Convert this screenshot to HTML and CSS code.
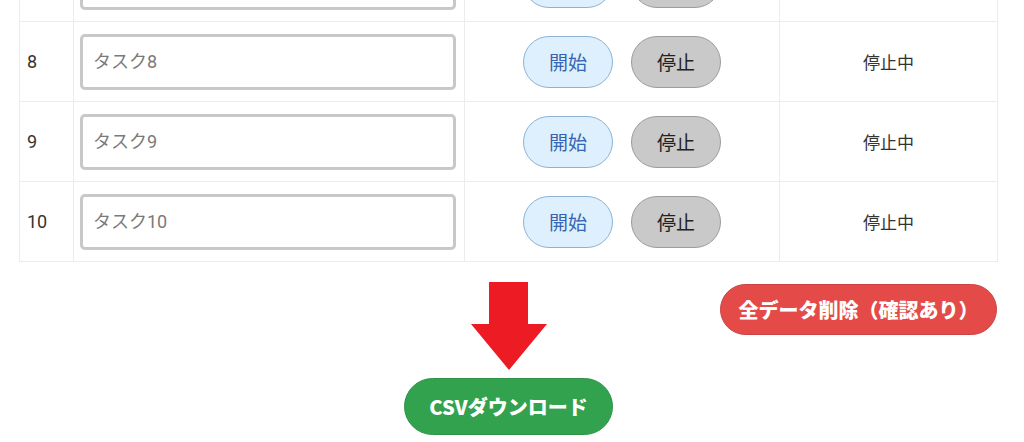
FILE: index.html
```html
<!DOCTYPE html>
<html lang="ja">
<head>
<meta charset="utf-8">
<link rel="stylesheet" href="styles.css">
</head>
<body>
<div class="page">
  <div class="table">
    <div class="row">
      <div class="cell num">7</div>
      <div class="cell name"><input class="task" type="text" placeholder="タスク7"></div>
      <div class="cell ctrl"><button class="btn start">開始</button><button class="btn stop">停止</button></div>
      <div class="cell status">停止中</div>
    </div>
    <div class="row">
      <div class="cell num">8</div>
      <div class="cell name"><input class="task" type="text" placeholder="タスク8"></div>
      <div class="cell ctrl"><button class="btn start">開始</button><button class="btn stop">停止</button></div>
      <div class="cell status">停止中</div>
    </div>
    <div class="row">
      <div class="cell num">9</div>
      <div class="cell name"><input class="task" type="text" placeholder="タスク9"></div>
      <div class="cell ctrl"><button class="btn start">開始</button><button class="btn stop">停止</button></div>
      <div class="cell status">停止中</div>
    </div>
    <div class="row">
      <div class="cell num">10</div>
      <div class="cell name"><input class="task" type="text" placeholder="タスク10"></div>
      <div class="cell ctrl"><button class="btn start">開始</button><button class="btn stop">停止</button></div>
      <div class="cell status">停止中</div>
    </div>
  </div>
  <div class="actions">
    <div class="center">
      <svg class="arrow" width="76" height="88" viewBox="0 0 76 88">
        <polygon points="18,0 57,0 57,42 76,42 38,88 0,42 18,42" fill="#ed1c24"/>
      </svg>
      <button class="big csv">CSVダウンロード</button>
    </div>
    <div class="right">
      <button class="big del">全データ削除（確認あり）</button>
    </div>
  </div>
</div>
</body>
</html>
```
FILE: styles.css
```css
* { box-sizing: border-box; }
html, body { margin: 0; padding: 0; background: #fff; overflow: hidden; }
body {
  font-family: "Noto Sans CJK JP", "Noto Sans", sans-serif;
  color: #333;
}
.page {
  width: 979px;
  margin-left: 19px;
}
.table {
  margin-top: -58px;
  border-left: 1px solid #ececec;
}
.row {
  display: grid;
  grid-template-columns: 54px 391px 315px 218px;
  height: 80px;
  border-bottom: 1px solid #ececec;
}
.cell {
  border-right: 1px solid #ececec;
  display: flex;
  align-items: center;
}
.num {
  padding-left: 7px;
  font-family: Roboto, "Noto Sans CJK JP", sans-serif;
  font-size: 18px;
  color: #333;
}
.name { padding-left: 6px; }
.task {
  width: 376px;
  height: 56px;
  border: 3px solid #c8c8c8;
  border-radius: 5px;
  padding: 0 0 0 10px;
  font-family: Roboto, "Noto Sans CJK JP", sans-serif;
  font-size: 18px;
  color: #333;
  background: #fff;
  outline: none;
}
.task::placeholder { color: #7a7a7a; }
.ctrl {
  justify-content: center;
  gap: 18px;
}
.btn {
  width: 90px;
  height: 52px;
  border-radius: 26px;
  font-family: inherit;
  font-size: 19px;
  padding: 0;
  cursor: pointer;
}
.start {
  background: #deeffd;
  border: 1px solid #8db3d6;
  color: #3565b2;
}
.stop {
  background: #c9c9c9;
  border: 1px solid #9d9d9d;
  color: #222;
}
.status {
  justify-content: center;
  font-size: 17px;
  color: #333;
}
.actions {
  display: grid;
  grid-template-columns: 1fr auto 1fr;
  margin-top: 20px;
}
.center {
  grid-column: 2;
  display: flex;
  flex-direction: column;
  align-items: center;
  gap: 8px;
}
.arrow { display: block; }
.right {
  grid-column: 3;
  display: flex;
  justify-content: flex-end;
  align-items: flex-start;
  padding-top: 2px;
  padding-right: 1px;
}
.big {
  font-family: inherit;
  font-weight: 900;
  font-size: 20px;
  color: #fff;
  padding: 0;
  cursor: pointer;
}
.csv {
  width: 209px;
  height: 57px;
  border-radius: 29px;
  background: #33a24f;
  border: 1px solid #2e9347;
}
.del {
  width: 277px;
  height: 51px;
  border-radius: 26px;
  background: #e44b48;
  border: 1px solid #c94442;
}
```
